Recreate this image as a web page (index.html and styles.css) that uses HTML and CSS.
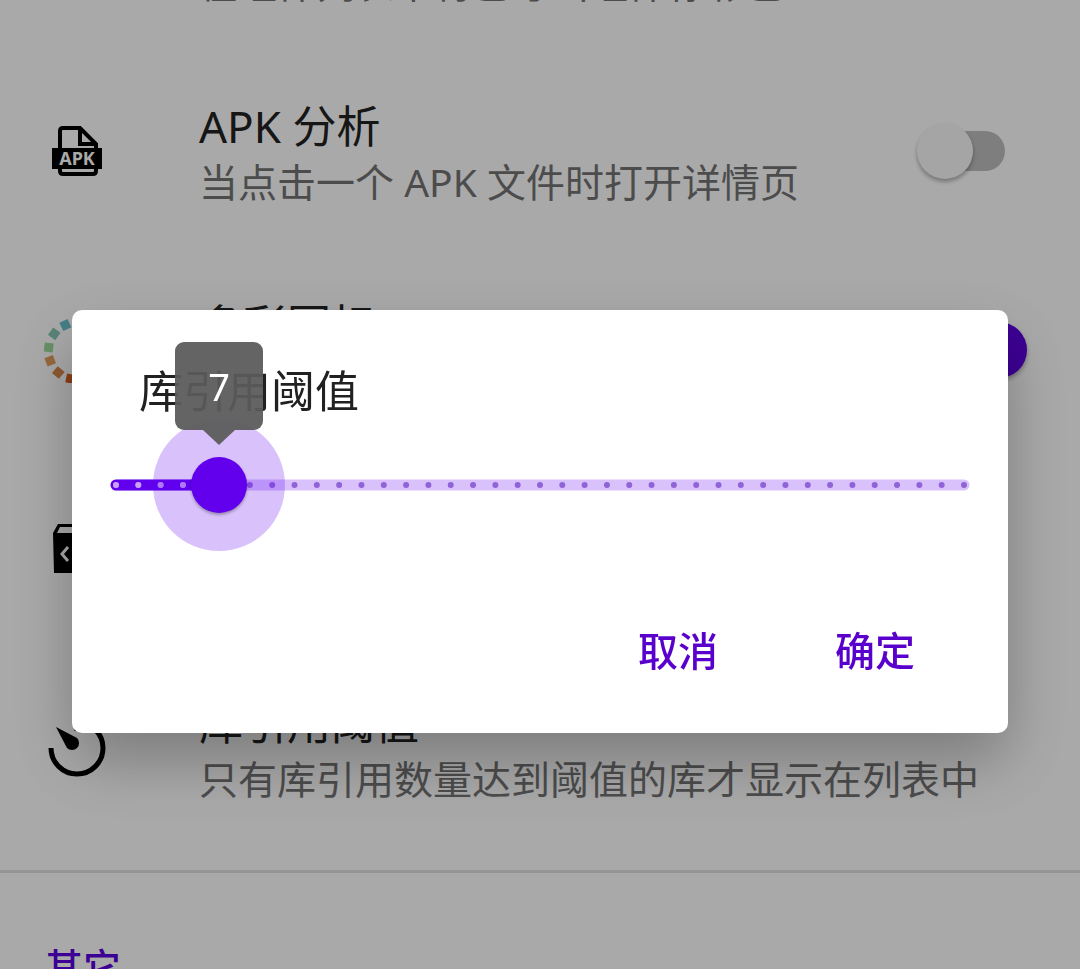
FILE: index.html
```html
<!DOCTYPE html>
<html lang="zh-CN">
<head>
<meta charset="utf-8">
<meta name="viewport" content="width=device-width, initial-scale=1">
<title>设置</title>
<link rel="stylesheet" href="styles.css">
</head>
<body>
<main class="settings">
  <section class="group">
    <div class="row">
      <span class="icon"></span>
      <div class="text">
        <span class="title"></span>
        <span class="summary">在组件列表中将已导出组件标彩色</span>
      </div>
    </div>
    <div class="row">
      <svg class="icon" viewBox="0 0 66 66" aria-hidden="true">
        <path d="M16 30V13q0-3 3-3H36L52 26v4M16 50v3q0 3 3 3H49q3 0 3-3v-3" fill="none" stroke="#000" stroke-width="4"/>
        <path d="M36 10V26H52" fill="none" stroke="#000" stroke-width="4"/>
        <rect x="8" y="30" width="50" height="21"/>
        <text class="icon-text" x="33" y="47" text-anchor="middle" fill="#fafafa">APK</text>
      </svg>
      <label class="text" for="apk">
        <span class="title">APK 分析</span>
        <span class="summary">当点击一个 APK 文件时打开详情页</span>
      </label>
      <input class="switch" type="checkbox" id="apk">
    </div>
    <div class="row">
      <svg class="icon" viewBox="0 0 66 66" aria-hidden="true">
        <g transform="translate(33 34)">
          <rect x="-4" y="-33" width="9" height="9" fill="#66bdc6" transform="rotate(-25)"/>
          <rect x="-4" y="-33" width="9" height="9" fill="#85c3b0" transform="rotate(-54)"/>
          <rect x="-4" y="-33" width="9" height="9" fill="#9bd596" transform="rotate(-84)"/>
          <rect x="-4" y="-33" width="9" height="9" fill="#e19a5c" transform="rotate(-111)"/>
          <rect x="-4" y="-33" width="9" height="9" fill="#d28548" transform="rotate(-140)"/>
          <rect x="-4" y="-33" width="9" height="9" fill="#cf5c20" transform="rotate(-168)"/>
        </g>
      </svg>
      <label class="text" for="colorful">
        <span class="title">多彩图标</span>
      </label>
      <input class="switch" type="checkbox" id="colorful" checked>
    </div>
    <div class="row">
      <svg class="icon" viewBox="0 0 66 66" aria-hidden="true">
        <path d="M14 8H52L58 17L57 57H10L9 17Z"/>
        <path d="M16 11H50L53 17H13Z" fill="#fafafa"/>
        <path d="M24 31L18 38L24 45M42 31L48 38L42 45" fill="none" stroke="#fafafa" stroke-width="3"/>
      </svg>
    </div>
    <div class="row">
      <svg class="icon" viewBox="0 0 66 66" aria-hidden="true">
        <path d="M7 33A26 26 0 1 0 33 7V16" fill="none" stroke="#000" stroke-width="5"/>
        <path d="M12 12L33 23A7 7 0 1 1 23 33Z"/>
      </svg>
      <div class="text">
        <span class="title">库引用阈值</span>
        <span class="summary">只有库引用数量达到阈值的库才显示在列表中</span>
      </div>
    </div>
  </section>
  <section class="group next">
    <h2 class="category">其它</h2>
  </section>
</main>

<div class="scrim">
  <div class="dialog" role="dialog" aria-labelledby="dialog-title">
    <h1 class="dialog-title" id="dialog-title">库引用阈值</h1>
    <div class="slider">
      <svg class="rail" aria-hidden="true">
        <clipPath id="active"><rect x="-6" y="-6" width="12%" height="12"/></clipPath>
        <line class="track" x2="100%"/>
        <line class="track filled" x2="12%"/>
        <line class="ticks" x2="100%" pathLength="38.001"/>
        <line class="ticks light" x2="100%" pathLength="38.001" clip-path="url(#active)"/>
      </svg>
      <div class="anchor">
        <span class="halo"></span>
      </div>
      <input class="range" type="range" min="2" max="40" step="any" value="6.62" aria-labelledby="dialog-title">
      <div class="anchor">
        <output class="bubble">7</output>
      </div>
    </div>
    <div class="actions">
      <button class="action" type="button">取消</button>
      <button class="action" type="button">确定</button>
    </div>
  </div>
</div>
</body>
</html>
```
FILE: styles.css
```css
* {
  box-sizing: border-box;
}

body {
  margin: 0;
  height: 100vh;
  overflow: hidden;
  background: #fafafa;
  color: #212121;
  font-family: "Noto Sans", "Noto Sans CJK SC", sans-serif;
}

/* The list is scrolled part of the way down. */
.settings {
  margin-top: -148px;
}

.group {
  padding-bottom: 23px;
}

.next {
  border-top: 3px solid #dcdcdc;
  padding-top: 65px;
}

.row {
  display: flex;
  align-items: center;
  height: 199px;
  padding: 0 53px 0 44px;
}

.icon {
  flex: none;
  width: 66px;
  height: 66px;
  margin-right: 89px;
}

.icon-text {
  font: bold 18px "Noto Sans", sans-serif;
}

.text {
  display: flex;
  flex: 1;
  flex-direction: column;
  height: 118px;
  padding-top: 6px;
}

.title,
.summary {
  height: 56px;
  line-height: 56px;
  white-space: nowrap;
}

.title {
  font-size: 44px;
}

.summary {
  color: #717171;
  font-size: 39px;
}

.category {
  margin: 0;
  padding: 0 45px;
  color: #5a00dc;
  font-size: 38px;
  font-weight: 500;
  line-height: 56px;
}

.switch {
  position: relative;
  flex: none;
  width: 110px;
  height: 56px;
  margin: 0;
  appearance: none;
}

.switch::before {
  content: "";
  position: absolute;
  inset: 8px 22px;
  border-radius: 20px;
  background: #bababa;
}

.switch::after {
  content: "";
  position: absolute;
  left: 0;
  width: 56px;
  height: 56px;
  border-radius: 50%;
  background: #f3f3f3;
  box-shadow: 0 3px 4px rgba(0, 0, 0, 0.3);
}

.switch:checked::before {
  background: #b58cf0;
}

.switch:checked::after {
  right: 0;
  left: auto;
  background: #5a00dc;
}

.scrim {
  position: fixed;
  inset: 0;
  display: flex;
  align-items: center;
  padding: 74px 72px 0;
  background: rgba(0, 0, 0, 0.32);
}

.dialog {
  flex: 1;
  padding: 53px 16px 36px;
  border-radius: 10px;
  background: #fff;
  box-shadow: 0 28px 64px rgba(0, 0, 0, 0.28);
}

.dialog-title {
  margin: 0 51px;
  font-size: 44px;
  font-weight: 400;
  line-height: 56px;
}

.slider {
  position: relative;
  display: flex;
  align-items: center;
  height: 132px;
  padding: 0 28px;
}

.rail {
  flex: 1;
  height: 1px;
  overflow: visible;
}

.track {
  stroke: #d9c2fb;
  stroke-width: 11px;
  stroke-linecap: round;
}

.filled {
  stroke: #6200ee;
}

.ticks {
  stroke: #9063d8;
  stroke-width: 6px;
  stroke-linecap: round;
  stroke-dasharray: 0 1;
}

.light {
  stroke: #c9a0fa;
}

/* Zero-size point at the centre of the thumb. */
.anchor {
  position: absolute;
  top: 50%;
  left: calc(28px + (100% - 56px) * 0.1215);
}

.halo {
  position: absolute;
  top: -66px;
  left: -66px;
  width: 132px;
  height: 132px;
  border-radius: 50%;
  background: rgba(98, 0, 238, 0.24);
}

.range {
  position: absolute;
  left: 0;
  width: 100%;
  height: 56px;
  margin: 0;
  background: none;
  appearance: none;
}

.range::-webkit-slider-thumb {
  width: 56px;
  height: 56px;
  border-radius: 50%;
  background: #6200ee;
  box-shadow: 0 2px 3px rgba(0, 0, 0, 0.3);
  appearance: none;
}

.bubble {
  position: absolute;
  z-index: 1;
  bottom: 40px;
  left: -44px;
  width: 88px;
  height: 103px;
  color: #fff;
  font-size: 38px;
  line-height: 88px;
  text-align: center;
}

.bubble::before {
  content: "";
  position: absolute;
  z-index: -1;
  inset: 0 0 15px;
  border-radius: 9px;
  background: rgba(90, 90, 90, 0.94);
}

.bubble::after {
  content: "";
  position: absolute;
  bottom: 0;
  left: 28px;
  border: 16px solid transparent;
  border-top: 15px solid rgba(90, 90, 90, 0.94);
  border-bottom: 0;
}

.actions {
  display: flex;
  justify-content: flex-end;
  gap: 21px;
  margin-top: 50px;
  padding-right: 29px;
}

.action {
  height: 96px;
  padding: 0 48px;
  border: 0;
  background: none;
  color: #5a00cc;
  font: 500 40px "Noto Sans", "Noto Sans CJK SC", sans-serif;
}
```
